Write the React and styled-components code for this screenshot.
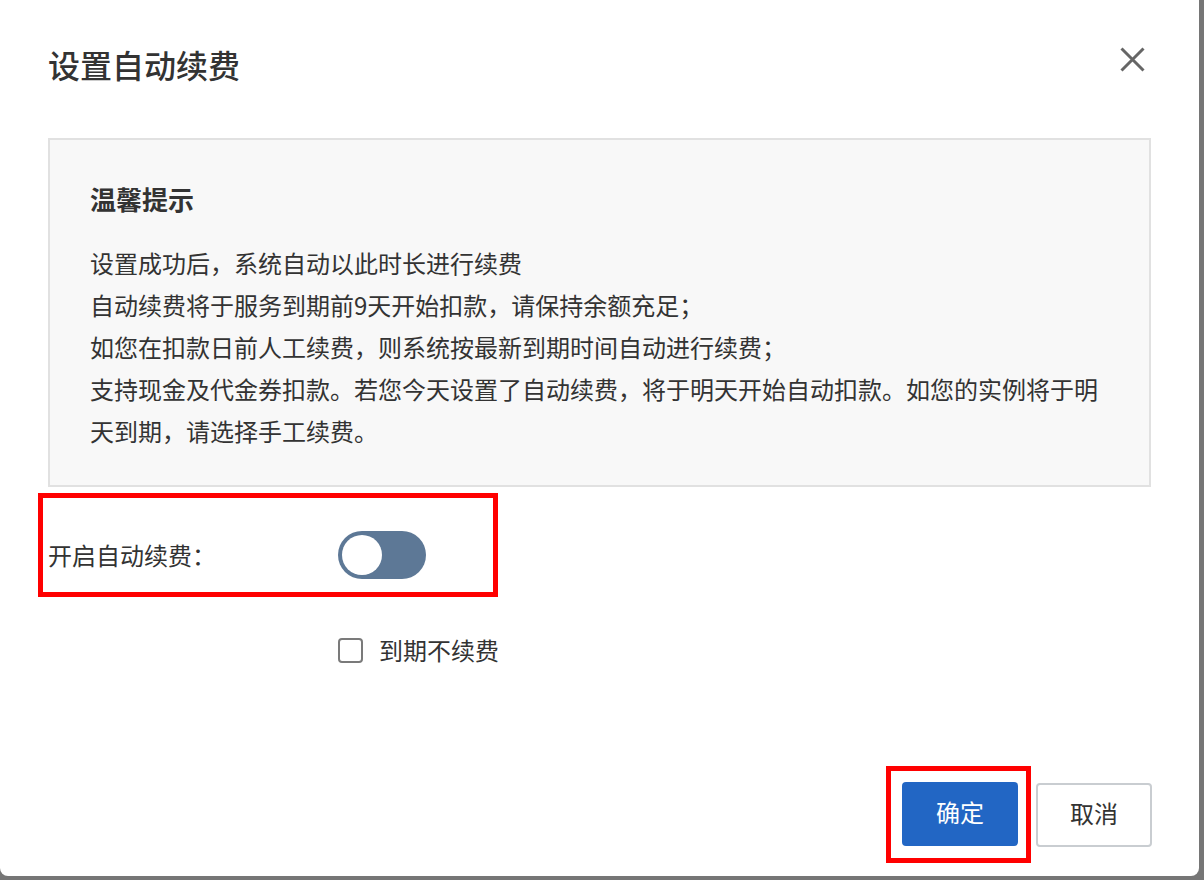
import React from 'react'
import styled, { createGlobalStyle } from 'styled-components'

const GlobalStyle = createGlobalStyle`
  html, body {
    margin: 0;
    padding: 0;
    background: #767676;
    overflow: hidden;
  }
  body {
    font-family: "Noto Sans CJK SC", "Noto Sans", sans-serif;
    color: #333;
  }
`

const Page = styled.div`
  width: 1204px;
  height: 880px;
`

const Dialog = styled.div`
  width: 1199px;
  height: 876px;
  box-sizing: border-box;
  background: #fff;
  border-radius: 0 0 8px 8px;
  padding: 0 47px 13px 48px;
  display: flex;
  flex-direction: column;
`

const Header = styled.div`
  height: 138px;
  display: flex;
  justify-content: space-between;
  align-items: flex-start;
  padding-right: 7px;
`

const Title = styled.h2`
  margin: 0;
  padding-top: 42px;
  font-size: 32px;
  line-height: 44px;
  font-weight: 500;
  color: #333;
`

const Close = styled.button`
  margin-top: 47px;
  width: 25px;
  height: 25px;
  padding: 0;
  border: none;
  background: none;
  cursor: pointer;
  svg { display: block; }
`

const Notice = styled.div`
  margin-right: 1px;
  border: 2px solid #e1e1e1;
  background: #f8f8f8;
  padding: 41px 40px 33px 40px;
`

const NoticeTitle = styled.h3`
  margin: 0 0 25px;
  font-size: 26px;
  line-height: 36px;
  font-weight: 700;
  color: #333;
`

const NoticeLine = styled.p`
  margin: 0;
  font-size: 24px;
  line-height: 42px;
  color: #333;
`

const Mark = styled.div`
  border: 5px solid #ff0000;
  box-sizing: border-box;
  width: ${p => p.$width || 'auto'};
  margin-left: ${p => p.$offset || '0'};
  margin-top: ${p => p.$top || '0'};
  padding: ${p => p.$pad};
`

const Row = styled.div`
  display: flex;
  align-items: center;
`

const Label = styled.span`
  width: 290px;
  font-size: 24px;
  line-height: 34px;
  color: #333;
`

const Toggle = styled.div`
  width: 88px;
  height: 48px;
  box-sizing: border-box;
  border-radius: 24px;
  background: #5d7896;
  padding: 4px;
  display: flex;
  align-items: center;
  justify-content: ${p => (p.$on ? 'flex-end' : 'flex-start')};
`

const Knob = styled.span`
  width: 40px;
  height: 40px;
  border-radius: 50%;
  background: #fff;
`

const CheckRow = styled.label`
  margin-top: 38px;
  padding-left: 290px;
  display: flex;
  align-items: center;
  gap: 16px;
  font-size: 24px;
  line-height: 30px;
  color: #333;
`

const Box = styled.span`
  width: 25px;
  height: 25px;
  box-sizing: border-box;
  border: 2px solid #7a7a7a;
  border-radius: 4px;
  background: #fff;
`

const Footer = styled.div`
  margin-top: auto;
  display: flex;
  justify-content: flex-end;
  align-items: center;
  gap: 5px;
`

const Button = styled.button`
  width: 116px;
  height: 64px;
  box-sizing: border-box;
  border-radius: 4px;
  font-family: inherit;
  font-size: 24px;
  line-height: 1;
  padding: 0 0 4px;
  cursor: pointer;
  background: ${p => (p.$primary ? '#2266c4' : '#fff')};
  color: ${p => (p.$primary ? '#fff' : '#333')};
  border: ${p => (p.$primary ? 'none' : '2px solid #c9cdd1')};
`

const lines = [
  '设置成功后，系统自动以此时长进行续费',
  '自动续费将于服务到期前9天开始扣款，请保持余额充足；',
  '如您在扣款日前人工续费，则系统按最新到期时间自动进行续费；',
  '支持现金及代金券扣款。若您今天设置了自动续费，将于明天开始自动扣款。如您的实例将于明天到期，请选择手工续费。',
]

const App = () => {
  return (
    <Page>
      <GlobalStyle />
      <Dialog>
        <Header>
          <Title>设置自动续费</Title>
          <Close aria-label="关闭">
            <svg width="25" height="25" viewBox="0 0 25 25">
              <path d="M1.5 1.5 L23.5 23.5 M23.5 1.5 L1.5 23.5" stroke="#666" strokeWidth="3" />
            </svg>
          </Close>
        </Header>

        <Notice>
          <NoticeTitle>温馨提示</NoticeTitle>
          {lines.map(l => (
            <NoticeLine key={l}>{l}</NoticeLine>
          ))}
        </Notice>

        <Mark $width="460px" $offset="-10px" $top="6px" $pad="33px 0 13px 5px">
          <Row>
            <Label>开启自动续费：</Label>
            <Toggle>
              <Knob />
            </Toggle>
          </Row>
        </Mark>

        <CheckRow>
          <Box />
          到期不续费
        </CheckRow>

        <Footer>
          <Mark $pad="11px 8px 12px 11px">
            <Button $primary>确定</Button>
          </Mark>
          <Button>取消</Button>
        </Footer>
      </Dialog>
    </Page>
  )
}

export default App
